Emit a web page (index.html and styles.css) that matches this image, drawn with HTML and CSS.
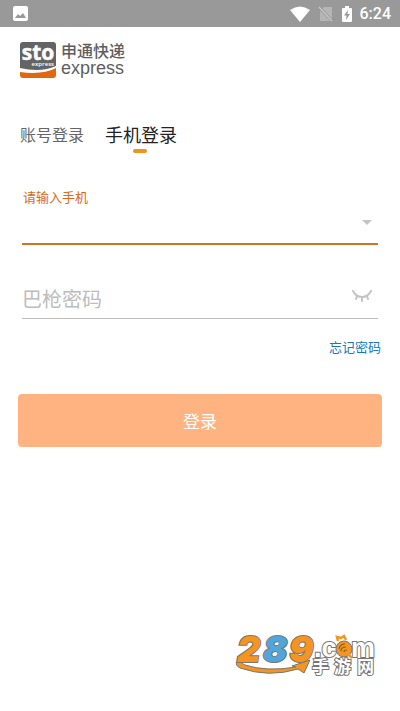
FILE: index.html
```html
<!DOCTYPE html>
<html lang="zh-CN">
<head>
<meta charset="utf-8">
<meta name="viewport" content="width=device-width, initial-scale=1">
<title>申通快递 登录</title>
<link rel="stylesheet" href="styles.css">
</head>
<body>
<header class="status">
  <svg width="15" height="15" viewBox="0 0 15 15" aria-hidden="true"><rect width="15" height="15" rx="2" fill="#fff"/><path d="M2 12l3-4 2 2 3-3 3 5z" fill="#999"/></svg>
  <div class="status-right">
    <svg width="20" height="16" viewBox="0 0 20 16" aria-hidden="true"><path d="M0 4Q10-3 20 4L10 16z" fill="#fff"/></svg>
    <svg width="16" height="18" viewBox="0 0 16 18" aria-hidden="true"><path d="M6 2h8v14H2V6z" fill="#b5b5b5"/><path d="M1 2l14 15" stroke="#999" stroke-width="3"/><path d="M1 2l13 14" stroke="#c8c8c8" stroke-width="1.3"/></svg>
    <svg width="10" height="16" viewBox="0 0 10 16" aria-hidden="true"><path d="M3 0h4v2h2q1 0 1 1v12q0 1-1 1H1q-1 0-1-1V3q0-1 1-1h2z" fill="#fff"/><path d="M6 4L2 9.500h2.500L4 14l4-6H5.500z" fill="#999"/></svg>
    <time class="clock">6:24</time>
  </div>
</header>
<main class="page">
  <div class="brand">
    <svg class="mark" width="38" height="38" viewBox="0 0 38 38" role="img" aria-label="sto express">
      <path d="M4 1h30q3 0 3 3v21Q22 32 1 27V4q0-3 3-3z" fill="#646464"/>
      <path d="M1 31Q24 34 37 27v7q0 3-3 3H4q-3 0-3-3z" fill="#e0690f"/>
      <text x="19" y="19" class="mark-name">sto</text>
      <text x="35" y="25" class="mark-sub">express</text>
    </svg>
    <div class="brand-text"><span class="brand-cn">申通快递</span><span class="brand-en">express</span></div>
  </div>
  <nav class="tabs">
    <button type="button" class="tab">账号登录</button>
    <button type="button" class="tab active">手机登录</button>
  </nav>
  <form class="form">
    <div class="field focused">
      <label class="label" for="phone">请输入手机</label>
      <div class="row">
        <input id="phone" type="tel" class="input">
        <button type="button" class="icon" aria-label="选择手机"><svg width="10" height="5" viewBox="0 0 10 5"><path d="M0 0h10L5 5z" fill="#c4c4c4"/></svg></button>
      </div>
    </div>
    <div class="field password">
      <div class="row">
        <input type="password" class="input" placeholder="巴枪密码" aria-label="巴枪密码">
        <button type="button" class="icon" aria-label="显示密码"><svg width="20" height="12" viewBox="0 0 20 12" fill="none" stroke="#c4c4c4" stroke-width="2" stroke-linecap="round"><path d="M1 1Q4 7 10 7T19 1M5 6L4 9M10 7v4M15 6l1 3"/></svg></button>
      </div>
    </div>
    <a class="forgot" href="#">忘记密码</a>
    <button type="submit" class="submit">登录</button>
  </form>
  <footer class="site">
    <svg width="142" height="42" viewBox="0 0 142 42" role="img" aria-label="289.com 手游网">
      <path d="M5 24Q-1 28 6 32Q35 42 64 33L70 37L76 24L58 30L62 31Q33 36 11 29Q6 27 8 24z" fill="#f5941f" stroke="#777" stroke-width="1"/>
      <text y="26" class="digits"><tspan x="3" class="orange">2</tspan><tspan x="29" class="blue">8</tspan><tspan x="55" class="orange">9</tspan></text>
      <text x="80" y="21" class="com">.c</text>
      <text x="117" y="21" class="com">m</text>
      <circle cx="110" cy="13" r="8" fill="#f5941f" stroke="#777"/>
      <path d="M104 5l-1-4 4 1 3-2 2 4M114 18l4 4" fill="none" stroke="#f5941f" stroke-width="2.500"/>
      <path d="M105 13q1-5 6-5M107 15q0-4 5-4M110 16q0-2 3-2" fill="none" stroke="#8b5a22" stroke-width="1.200"/>
      <text y="37" class="cn"><tspan x="78">手</tspan><tspan x="100">游</tspan><tspan x="123">网</tspan></text>
    </svg>
  </footer>
</main>
</body>
</html>
```
FILE: styles.css
```css
* { box-sizing: border-box; }
body {
  margin: 0;
  min-height: 100vh;
  display: flex;
  flex-direction: column;
  background: #fff;
  color: #222;
  font-family: Roboto, "Noto Sans CJK SC", sans-serif;
}
button, input { font: inherit; border: 0; padding: 0; background: none; }
svg { display: block; flex: none; overflow: visible; }
.status {
  height: 27px;
  padding: 0 9px 0 13px;
  display: flex;
  align-items: center;
  justify-content: space-between;
  background: #999;
}
.status-right { display: flex; align-items: center; gap: 8px; }
.clock { color: #fff; font-size: 16px; font-weight: 500; line-height: 27px; }
.page { flex: 1; display: flex; flex-direction: column; padding: 14px 18px 33px; }
.brand { display: flex; gap: 4px; padding-left: 1px; }
.mark-name { font: 700 21px "Open Sans", sans-serif; fill: #fff; stroke: #fff; stroke-width: 0.5; text-anchor: middle; }
.mark-sub { font: 600 6px "Open Sans", sans-serif; fill: #fff; text-anchor: end; }
.brand-text { display: flex; flex-direction: column; color: #5e5e5e; padding-top: 2px; }
.brand-cn { font-size: 16px; line-height: 17px; font-weight: 500; }
.brand-en { font: 18px/16px "Liberation Sans", sans-serif; }
.tabs { display: flex; align-items: center; gap: 21px; margin-top: 41px; padding-left: 2px; }
.tab { font-size: 16px; line-height: 32px; color: #666; }
.tab.active { position: relative; font-size: 18px; color: #222; }
.tab.active::after {
  content: "";
  position: absolute;
  left: 50%;
  bottom: -1px;
  width: 14px;
  height: 4px;
  margin-left: -8px;
  border-radius: 2px;
  background: #f0921e;
}
.form { display: flex; flex-direction: column; margin-top: 36px; }
.field { margin: 0 4px; border-bottom: 1px solid #bdbdbd; }
.focused { border-bottom: 2px solid #cf7420; }
.label { display: block; font-size: 13px; line-height: 20px; color: #dc6a14; padding-left: 1px; }
.row { display: flex; align-items: center; height: 36px; }
.focused .row { height: 35px; padding-bottom: 7px; }
.input { flex: 1; min-width: 0; height: 36px; font-size: 20px; outline: 0; }
.focused .input { height: 28px; }
.input::placeholder { color: #bdbdbd; opacity: 1; }
.icon { padding: 6px; }
.password { margin-top: 37px; }
.password .icon { padding-bottom: 14px; }
.forgot { align-self: flex-end; margin-top: 19px; margin-right: 1px; font-size: 13px; line-height: 20px; color: #1479bd; text-decoration: none; }
.submit { height: 53px; margin-top: 36px; border-radius: 4px; background: #ffb381; color: #fff; font-size: 17px; }
.site { display: flex; justify-content: flex-end; margin-top: auto; padding-right: 6px; }
.digits { font: italic 900 36px Inter, sans-serif; stroke: #777; stroke-width: 2; paint-order: stroke; }
.orange { fill: #f5941f; }
.blue { fill: #50a5da; }
.com { font: 700 27px "Liberation Sans", sans-serif; fill: #fff; stroke: #777; stroke-width: 2; paint-order: stroke; }
.cn { font: 700 17px "Noto Sans CJK SC", sans-serif; fill: #fff; stroke: #777; stroke-width: 2; paint-order: stroke; }
```
